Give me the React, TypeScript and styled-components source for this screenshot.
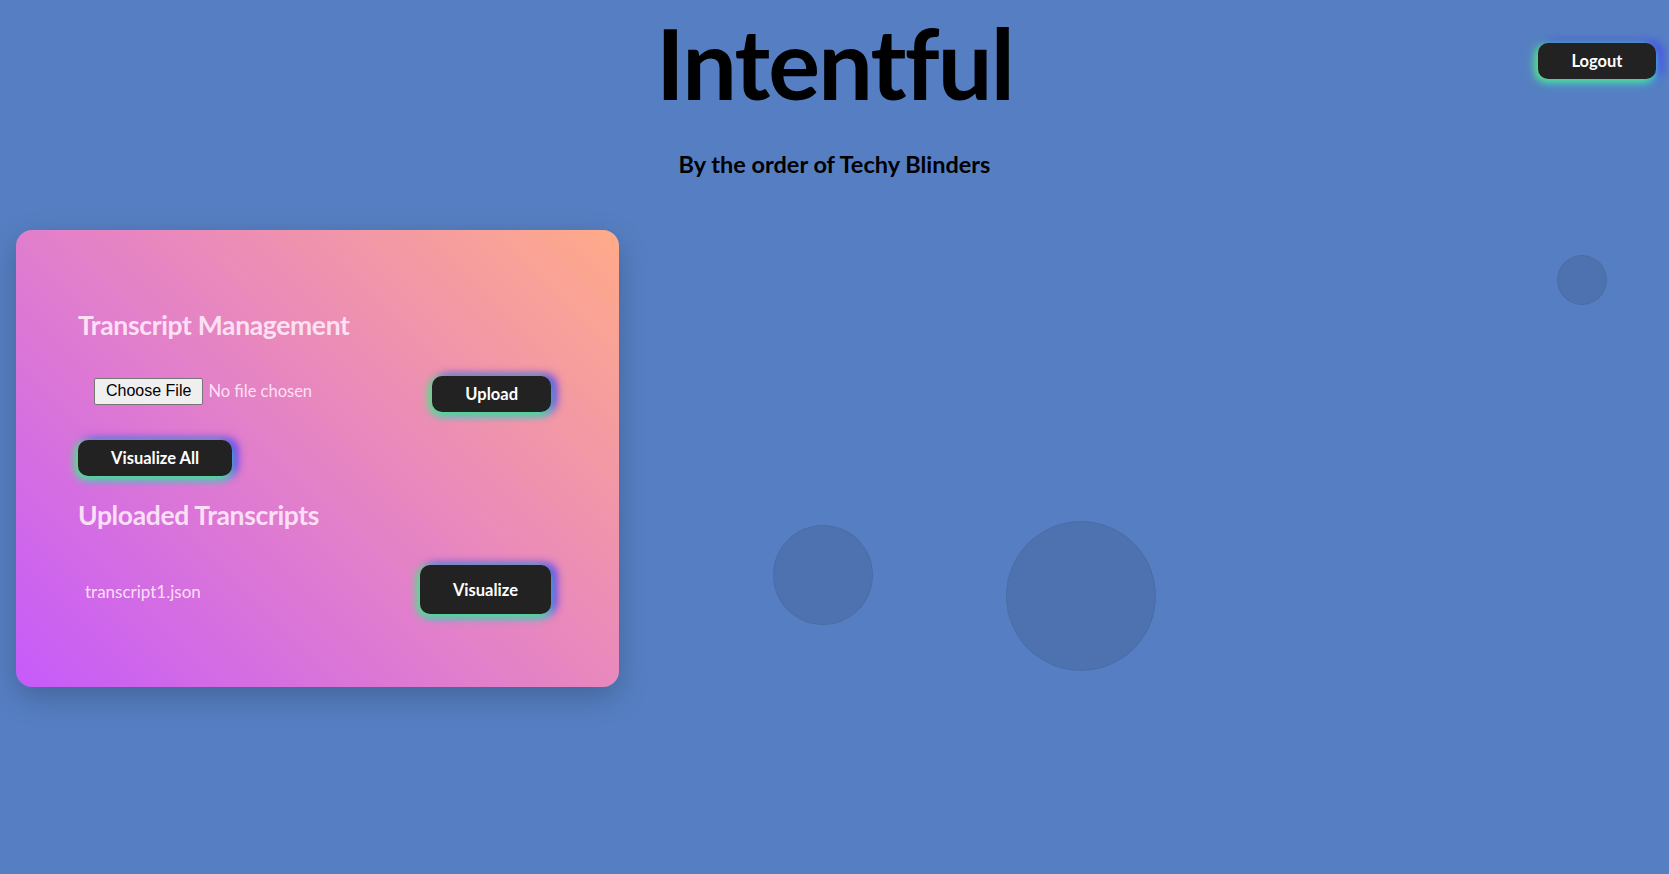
import React from "react";
import styled, { createGlobalStyle } from "styled-components";

const GlobalStyle = createGlobalStyle`
  html, body {
    margin: 0;
    padding: 0;
    background: #567fc3;
  }
  body {
    font-family: Lato, "Noto Sans", sans-serif;
  }
  * { box-sizing: border-box; }
`;

const Page = styled.div`
  position: relative;
  min-height: 100vh;
  overflow: hidden;
  background: #567fc3;
`;

const Header = styled.header`
  display: flex;
  flex-direction: column;
  align-items: center;
  padding-top: 15px;
`;

const Title = styled.h1`
  margin: 0;
  font-family: Lato, sans-serif;
  font-weight: 700;
  font-size: 97px;
  line-height: 96px;
  letter-spacing: -1.8px;
  color: #000;
`;

const Subtitle = styled.p`
  margin: 40px 0 0;
  font-family: Lato, sans-serif;
  font-weight: 700;
  font-size: 23.5px;
  line-height: 26px;
  color: #000;
`;

const GlowButton = styled.button<{ $tall?: boolean }>`
  display: inline-flex;
  align-items: center;
  justify-content: center;
  height: ${(p) => (p.$tall ? "49px" : "36px")};
  padding: 0 33px;
  border: none;
  border-radius: 10px;
  background: #222222;
  color: #ffffff;
  font-family: Lato, sans-serif;
  font-weight: 700;
  font-size: 16.5px;
  cursor: pointer;
  box-shadow:
    -3px 2px 8px rgba(90, 230, 120, 1),
    0 4px 8px rgba(60, 200, 220, 0.9),
    5px -1px 10px rgba(70, 50, 255, 1);
`;

const LogoutButton = styled(GlowButton)`
  position: absolute;
  top: 43px;
  right: 13px;
  width: 118px;
`;

const Main = styled.main`
  display: flex;
  padding: 53px 16px 0;
`;

const Card = styled.section`
  width: 603px;
  padding: 80px 68px 73px 62px;
  border-radius: 16px;
  background: linear-gradient(45deg, #c65bfa 0%, #e27fcb 45%, #ffab89 100%);
  box-shadow: 0 10px 30px rgba(0, 0, 0, 0.22);
  display: flex;
  flex-direction: column;
`;

const SectionTitle = styled.h2<{ $gap: number }>`
  margin: 0 0 ${(p) => p.$gap}px;
  font-family: Lato, sans-serif;
  font-weight: 700;
  font-size: 26.5px;
  line-height: 31px;
  letter-spacing: -0.35px;
  color: rgba(255, 234, 250, 0.92);
`;

const UploadRow = styled.div`
  display: flex;
  align-items: center;
  justify-content: space-between;
  padding-left: 16px;
  margin-bottom: 28px;
`;

const FileInput = styled.input`
  font-family: Lato, sans-serif;
  font-size: 16.5px;
  color: rgba(255, 230, 248, 0.95);
  margin-top: -6px;

  &::file-selector-button {
    font-family: "Liberation Sans", Arial, sans-serif;
    font-size: 16px;
    height: 27px;
    padding: 0 11px;
    margin-right: 5px;
    color: #000;
    background: #efefef;
    border: 1px solid #767676;
    border-radius: 2px;
  }
`;

const ActionRow = styled.div`
  display: flex;
  margin-bottom: 24px;
`;

const FileList = styled.ul`
  list-style: none;
  margin: 0;
  padding: 0;
  display: flex;
  flex-direction: column;
`;

const FileItem = styled.li`
  display: flex;
  align-items: center;
  justify-content: space-between;
  padding-left: 7px;
`;

const FileName = styled.span`
  font-family: Lato, sans-serif;
  font-size: 17px;
  color: rgba(255, 230, 248, 0.95);
  margin-top: 4px;
`;

const Bubble = styled.div<{ $x: number; $y: number; $size: number }>`
  position: absolute;
  left: ${(p) => p.$x}px;
  top: ${(p) => p.$y}px;
  width: ${(p) => p.$size}px;
  height: ${(p) => p.$size}px;
  border-radius: 50%;
  background: rgba(0, 0, 0, 0.1);
  border: 1px solid rgba(0, 0, 0, 0.05);
  pointer-events: none;
`;

export default function App() {
  return (
    <Page>
      <GlobalStyle />
      <Bubble $x={773} $y={525} $size={100} />
      <Bubble $x={1006} $y={521} $size={150} />
      <Bubble $x={1557} $y={255} $size={50} />
      <Header>
        <Title>Intentful</Title>
        <Subtitle>By the order of Techy Blinders</Subtitle>
      </Header>
      <LogoutButton>Logout</LogoutButton>
      <Main>
        <Card>
          <SectionTitle $gap={35}>Transcript Management</SectionTitle>
          <UploadRow>
            <FileInput type="file" />
            <GlowButton>Upload</GlowButton>
          </UploadRow>
          <ActionRow>
            <GlowButton>Visualize All</GlowButton>
          </ActionRow>
          <SectionTitle $gap={34}>Uploaded Transcripts</SectionTitle>
          <FileList>
            <FileItem>
              <FileName>transcript1.json</FileName>
              <GlowButton $tall>Visualize</GlowButton>
            </FileItem>
          </FileList>
        </Card>
      </Main>
    </Page>
  );
}
